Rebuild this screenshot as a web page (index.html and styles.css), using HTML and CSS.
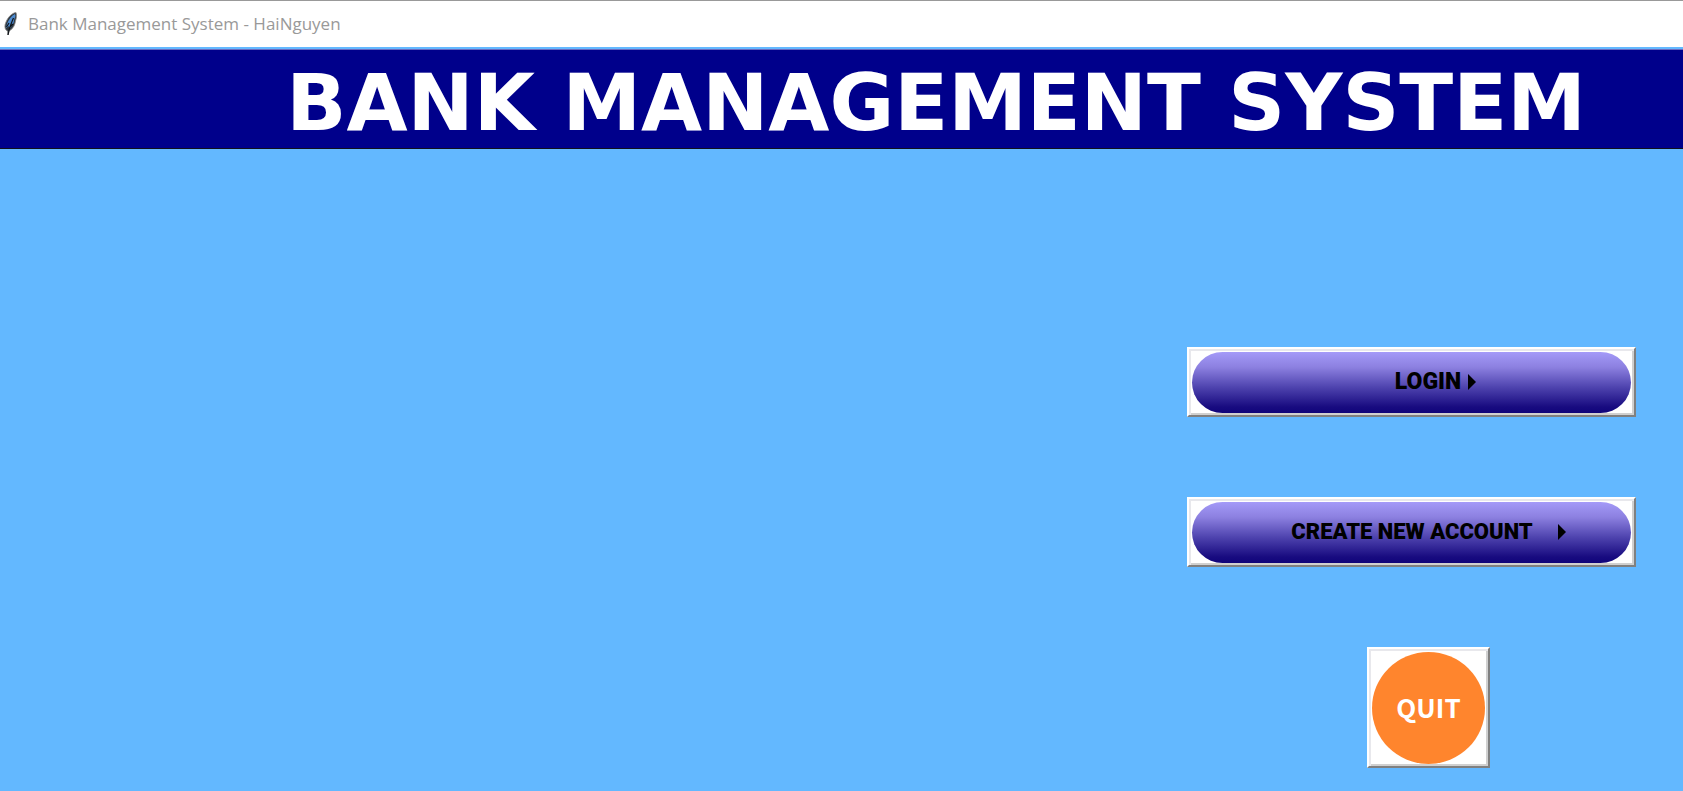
FILE: index.html
```html
<!DOCTYPE html>
<html lang="en">
<head>
<meta charset="utf-8">
<title>Bank Management System - HaiNguyen</title>
<link rel="stylesheet" href="styles.css">
</head>
<body>
<div class="window">
  <header class="titlebar">
    <svg class="feather" viewBox="0 0 14 24" aria-hidden="true">
      <path d="M12 0.5C8 1 4 5 2 10C0.5 13 0.5 16 2 18L3.500 19L4 23L5 19C9 17 11 13 11.500 9C12.500 6 13 3 12 0.500Z" fill="#303840" stroke="#8b8b8b" stroke-width="0.800"/>
      <path d="M11 2C7 4 4.500 8 3 12L2 16L5 14L5 17C8.500 14 10 11 10 8L11.500 4Z" fill="#4d8bd0"/>
      <path d="M9.500 6C8 10 5 14 4 23M2.500 15L5 11M6 15L9 12" fill="none" stroke="#101418" stroke-width="1.200"/>
    </svg>
    <span>Bank Management System - HaiNguyen</span>
  </header>
  <h1 class="banner">BANK MANAGEMENT SYSTEM</h1>
  <main class="content">
    <nav class="actions">
      <button class="action" type="button"><span class="pill">LOGIN<svg class="arrow" viewBox="0 0 8 16" aria-hidden="true"><path d="M0 0L8 8L0 16Z"/></svg></span></button>
      <button class="action" type="button"><span class="pill pill-wide">CREATE NEW ACCOUNT<svg class="arrow" viewBox="0 0 8 16" aria-hidden="true"><path d="M0 0L8 8L0 16Z"/></svg></span></button>
      <button class="action quit" type="button"><span class="disc">QUIT</span></button>
    </nav>
  </main>
</div>
</body>
</html>
```
FILE: styles.css
```css
* {
  box-sizing: border-box;
}

body {
  margin: 0;
  background: #63b8ff;
}

.window {
  display: flex;
  flex-direction: column;
  min-height: 100vh;
}

.titlebar {
  display: flex;
  align-items: center;
  gap: 10px;
  height: 47px;
  padding-left: 4px;
  border-top: 1px solid #999;
  background: #fff;
  color: #999;
  font: 17px/24px "Open Sans", "Noto Sans", sans-serif;
}

.feather {
  width: 14px;
  height: 24px;
}

.banner {
  margin: 2px 0 0;
  padding: 8px 0 0 189px;
  border-top: 1px solid #6a6ac0;
  border-bottom: 1px solid #10101c;
  background: #00008b;
  color: #fff;
  text-align: center;
  white-space: nowrap;
  font: bold 79px/90px "DejaVu Sans", Verdana, sans-serif;
}

.content {
  display: flex;
  justify-content: flex-end;
  padding: 198px 47px 22px;
}

.actions {
  display: flex;
  flex-direction: column;
  gap: 80px;
  width: 449px;
}

.action {
  height: 70px;
  padding: 3px;
  border: 2px solid;
  border-color: #fff #808080 #808080 #fff;
  background: #fff;
  box-shadow: inset 2px 2px #e8e8ec, inset -2px -2px #d0d0d0;
}

.pill {
  display: flex;
  align-items: center;
  justify-content: center;
  gap: 7px;
  height: 61px;
  padding: 0 0 2px 48px;
  border-radius: 32px;
  background: linear-gradient(#a49af8, #8c80e0 25%, #4e43ae 58%, #180b80 90%, #10047a);
  color: #000;
  font: 900 23px/24px Roboto, "Open Sans", sans-serif;
}

.pill-wide {
  gap: 25px;
  padding-left: 34px;
  font-size: 22px;
}

.arrow {
  width: 8px;
  height: 16px;
}

.quit {
  align-self: flex-end;
  width: 123px;
  height: 121px;
  margin-right: 146px;
}

.disc {
  display: flex;
  align-items: center;
  justify-content: center;
  height: 112px;
  padding-bottom: 2px;
  border-radius: 50%;
  background: #ff852d;
  color: #fff;
  font: 700 26px/32px "Noto Sans CJK SC", "Noto Sans", sans-serif;
}
```
